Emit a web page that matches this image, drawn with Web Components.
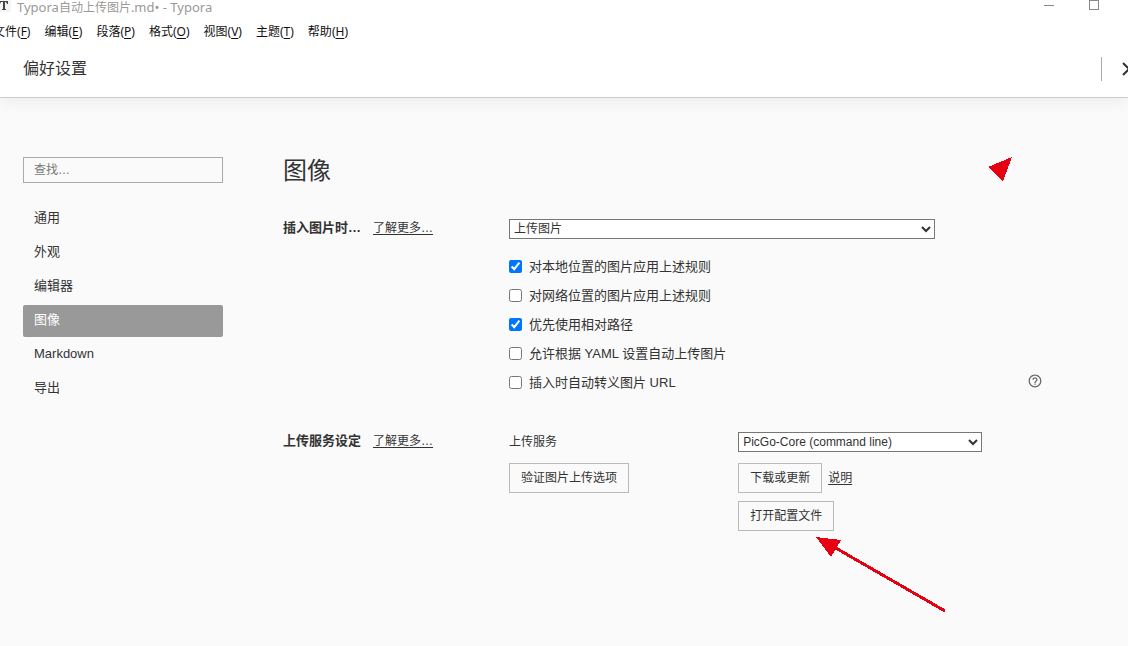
<!DOCTYPE html>
<html lang="zh-CN">
<head>
<meta charset="utf-8">
<title>Typora</title>
<style>
  body { margin: 0; background: #fafafa; color: #333; font: 13px/20px "Liberation Sans", "Noto Sans CJK SC", sans-serif; }
</style>
</head>
<body>
<preferences-window></preferences-window>

<script>
function define(name, html, setup) {
  const template = document.createElement('template');
  template.innerHTML = html;
  customElements.define(name, class extends HTMLElement {
    constructor() {
      super();
      this.attachShadow({ mode: 'open' }).append(template.content.cloneNode(true));
    }
    connectedCallback() {
      if (setup) setup(this, this.shadowRoot);
    }
  });
}

define('title-bar', `
  <style>
    :host { display: flex; align-items: flex-start; height: 14px; background: #fff; color: #999; font: 13px/14px "Noto Sans", "Noto Sans CJK SC", sans-serif; }
    .logo { width: 11px; height: 12px; margin-right: 6px; }
    .caption { flex: 1; white-space: nowrap; line-height: 14px; }
    ::slotted(span) { font-size: 12px; line-height: 12px; }
    button { border: 0; padding: 0; background: none; width: 45px; height: 12px; display: flex; justify-content: center; }
    .controls { display: flex; margin-right: 12px; }
    svg { display: block; }
  </style>
  <svg class="logo" viewBox="0 0 11 12" aria-hidden="true">
    <path d="M0 0H11V10Q11 12 9 12H0Z" fill="#f4f4f2"/>
    <path d="M0 1H8V4H7L6 2H5V9H6V10H2V9H3V2H1L0 4Z" fill="#444"/>
  </svg>
  <div class="caption"><slot></slot></div>
  <div class="controls">
    <button aria-label="最小化"><svg width="12" height="12"><path d="M1 5.500H11" stroke="#888"/></svg></button>
    <button aria-label="最大化"><svg width="12" height="12"><rect x="1.500" y=".500" width="9" height="9" fill="none" stroke="#888"/></svg></button>
  </div>
`);

define('menu-item', `
  <style>
    :host { display: block; }
    button { border: 0; padding: 0; background: none; color: #111; font: 12px/20px "Noto Sans", "Noto Sans CJK SC", sans-serif; white-space: nowrap; }
    u { text-underline-offset: 2px; }
  </style>
  <button><slot></slot>(<u></u>)</button>
`, (host, root) => { root.querySelector('u').textContent = host.getAttribute('key'); });

define('menu-bar', `
  <style>
    :host { display: flex; gap: 14px; padding: 8px 0 4px; margin-left: -7px; }
  </style>
  <slot></slot>
`);

define('sheet-header', `
  <style>
    :host { display: flex; align-items: center; box-sizing: border-box; height: 52px; padding: 0 0 6px 23px; background: #fff; border-bottom: 1px solid #ccc; box-shadow: 0 2px 16px rgba(0,0,0,.07); }
    h1 { flex: 1; margin: 0; font-size: 16px; font-weight: 400; line-height: 24px; }
    .rule { width: 1px; height: 24px; background: #aaa; margin-right: 19px; }
    button { border: 0; padding: 0; background: none; width: 16px; height: 16px; margin-right: -9px; flex: none; }
    svg { display: block; }
  </style>
  <h1><slot></slot></h1>
  <span class="rule"></span>
  <button aria-label="关闭"><svg width="16" height="16" viewBox="0 0 16 16"><path d="M2 2L14 14M14 2L2 14" stroke="#333" stroke-width="2"/></svg></button>
`);

define('nav-link', `
  <style>
    :host { display: block; }
    a { display: block; padding: 5px 11px 7px; border-radius: 2px; color: #333; text-decoration: none; }
    :host([active]) a { background: #999; color: #fff; }
  </style>
  <a href="#"><slot></slot></a>
`, (host, root) => { if (host.hasAttribute('active')) root.querySelector('a').setAttribute('aria-current', 'page'); });

define('settings-nav', `
  <style>
    :host { display: block; width: 200px; flex: none; }
    input { display: block; box-sizing: border-box; width: 100%; height: 26px; margin: 0 0 20px; padding: 0 10px; border: 1px solid #aaa; background: transparent; font: 12px/20px "Liberation Sans", "Noto Sans CJK SC", sans-serif; }
    input::placeholder { color: #777; }
    nav { display: flex; flex-direction: column; gap: 2px; }
  </style>
  <input type="search" placeholder="查找…" aria-label="查找">
  <nav><slot></slot></nav>
`);

define('settings-section', `
  <style>
    :host { display: grid; grid-template-columns: 226px 1fr; align-items: start; }
    .head { display: flex; gap: 12px; line-height: 20px; margin-top: -1px; }
    h3 { margin: 0; font-size: 13px; font-weight: 700; line-height: 20px; }
    a { color: #333; font-size: 12px; text-underline-offset: 2px; }
  </style>
  <div class="head"><h3><slot name="title"></slot></h3><a href="#">了解更多…</a></div>
  <div><slot></slot></div>
`);

define('select-box', `
  <style>
    :host { display: block; }
    select { display: block; box-sizing: border-box; width: 100%; height: 20px; margin: 0; padding: 0; border: 1px solid #767676; border-radius: 0; background: #fff; color: #333; font: 12px/16px "Liberation Sans", "Noto Sans CJK SC", sans-serif; }
  </style>
  <select><option></option></select>
`, (host, root) => {
  root.querySelector('option').textContent = host.getAttribute('value');
  root.querySelector('select').setAttribute('aria-label', host.getAttribute('label'));
});

define('check-option', `
  <style>
    :host { display: flex; align-items: center; justify-content: space-between; height: 29px; }
    label { display: flex; align-items: center; gap: 7px; }
    input { margin: 0; width: 13px; height: 13px; }
  </style>
  <label><input type="checkbox"><span><slot></slot></span></label>
  <slot name="help"></slot>
`, (host, root) => { root.querySelector('input').checked = host.hasAttribute('checked'); });

define('help-button', `
  <style>
    :host { display: block; padding-bottom: 3px; }
    button { display: block; border: 0; padding: 0; background: none; width: 14px; height: 14px; }
    svg { display: block; }
  </style>
  <button aria-label="帮助"><svg width="14" height="14" viewBox="0 0 24 24" fill="#666"><path d="M11 18h2v-2h-2v2zm1-16C6.480 2 2 6.480 2 12s4.480 10 10 10 10-4.480 10-10S17.520 2 12 2zm0 18c-4.410 0-8-3.590-8-8s3.590-8 8-8 8 3.590 8 8-3.590 8-8 8zm0-14c-2.210 0-4 1.790-4 4h2c0-1.100.900-2 2-2s2 .900 2 2c0 2-3 1.750-3 5h2c0-2.250 3-2.500 3-5 0-2.210-1.790-4-4-4z" transform="translate(-1.200 -1.200) scale(1.100)"/></svg></button>
`);

define('push-button', `
  <style>
    :host { display: block; }
    button { display: block; box-sizing: border-box; height: 30px; padding: 0 11px; border: 1px solid #bbb; background: transparent; color: #333; font: 12px/20px "Liberation Sans", "Noto Sans CJK SC", sans-serif; white-space: nowrap; }
  </style>
  <button><slot></slot></button>
`);

define('upload-settings', `
  <style>
    :host { display: grid; grid-template-columns: 43% 1fr; row-gap: 8px; font-size: 12px; align-items: center; }
    .service { margin-right: 60px; }
    .row { display: flex; gap: 6px; align-items: center; }
    .first { margin-top: 3px; }
    .last { grid-column: 2; }
    a { color: #333; text-underline-offset: 2px; }
  </style>
  <span>上传服务</span>
  <select-box class="service" label="上传服务" value="PicGo-Core (command line)"></select-box>
  <div class="row first"><push-button>验证图片上传选项</push-button></div>
  <div class="row first"><push-button>下载或更新</push-button><a href="#">说明</a></div>
  <div class="row last"><push-button>打开配置文件</push-button></div>
`);

define('image-settings', `
  <style>
    :host { display: block; flex: 1; }
    h2 { margin: -2px 0 32px; font-size: 24px; font-weight: 400; line-height: 32px; }
    .mode { width: 80%; margin-bottom: 13px; }
    .uploads { margin-top: 35px; }
  </style>
  <h2>图像</h2>
  <settings-section>
    <span slot="title">插入图片时…</span>
    <select-box class="mode" label="插入图片时" value="上传图片"></select-box>
    <check-option checked>对本地位置的图片应用上述规则</check-option>
    <check-option>对网络位置的图片应用上述规则</check-option>
    <check-option checked>优先使用相对路径</check-option>
    <check-option>允许根据 YAML 设置自动上传图片</check-option>
    <check-option>插入时自动转义图片 URL<help-button slot="help"></help-button></check-option>
  </settings-section>
  <settings-section class="uploads">
    <span slot="title">上传服务设定</span>
    <upload-settings></upload-settings>
  </settings-section>
`);

define('arrow-marks', `
  <style>
    :host { display: block; pointer-events: none; }
    svg { position: absolute; display: block; fill: #e60012; shape-rendering: crispEdges; }
    .pointer { left: 988px; top: 157px; }
    .arrow { left: 816px; top: 537px; }
  </style>
  <svg class="pointer" width="25" height="25" aria-hidden="true"><path d="M0 10L24 0L15 24Z"/></svg>
  <svg class="arrow" width="130" height="75" aria-hidden="true"><path d="M0 0L25 3L15 20Z"/><path d="M18 10L129 74" stroke="#e60012" stroke-width="3"/></svg>
`);

define('preferences-window', `
  <style>
    :host { display: block; position: relative; min-height: 100vh; overflow: hidden; }
    .top { position: relative; z-index: 1; background: #fff; }
    main { display: flex; gap: 60px; padding: 59px 86px 40px 23px; }
  </style>
  <div class="top">
    <title-bar>Typora<span>自动上传图片</span>.md• - Typora</title-bar>
    <menu-bar>
      <menu-item key="F">文件</menu-item>
      <menu-item key="E">编辑</menu-item>
      <menu-item key="P">段落</menu-item>
      <menu-item key="O">格式</menu-item>
      <menu-item key="V">视图</menu-item>
      <menu-item key="T">主题</menu-item>
      <menu-item key="H">帮助</menu-item>
    </menu-bar>
  </div>
  <sheet-header>偏好设置</sheet-header>
  <main>
    <settings-nav>
      <nav-link>通用</nav-link>
      <nav-link>外观</nav-link>
      <nav-link>编辑器</nav-link>
      <nav-link active>图像</nav-link>
      <nav-link>Markdown</nav-link>
      <nav-link>导出</nav-link>
    </settings-nav>
    <image-settings></image-settings>
  </main>
  <arrow-marks></arrow-marks>
`);
</script>
</body>
</html>
